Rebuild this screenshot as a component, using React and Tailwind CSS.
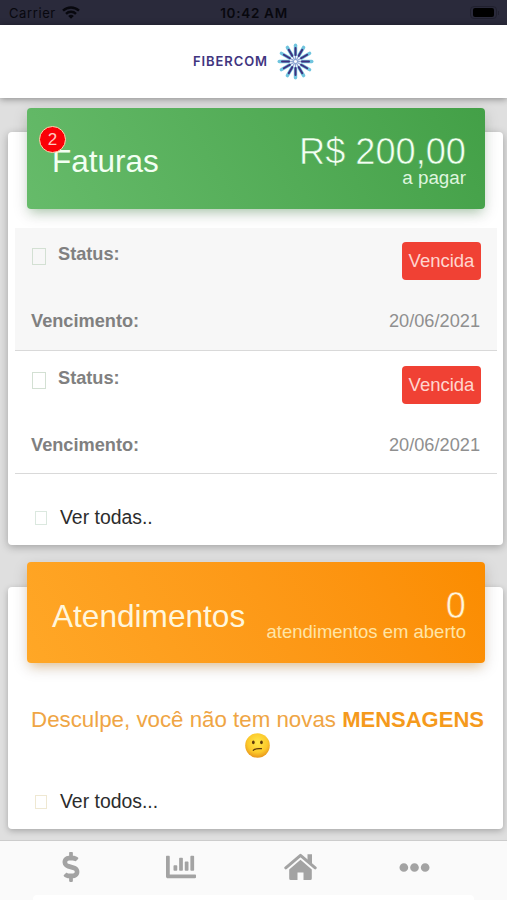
import React from "react"
import { FaDollarSign, FaChartBar, FaEllipsisH } from "react-icons/fa"

const faturas = [
    { id: 1, status: "Vencida", vencimento: "20/06/2021" },
    { id: 2, status: "Vencida", vencimento: "20/06/2021" },
]

const rays = [0, 30, 60, 90, 120, 150, 180, 210, 240, 270, 300, 330]

function StatusBar() {
    return (
        <div className="grid grid-cols-3 items-center h-[25px] pl-[9px] pr-[8px] pt-[2px] bg-[#2a2a3b] text-[#08080e] font-['Inter',sans-serif] text-[13px] leading-none">
            <div className="flex items-center gap-[6px]">
                <span className="tracking-[0.6px]">Carrier</span>
                <svg className="w-[18px] h-[13px] -mt-[2px]" viewBox="0 0 18 13" fill="none" stroke="currentColor" strokeWidth="2.4">
                    <path d="M1 4.7a11.5 11.5 0 0 1 16 0" />
                    <path d="M4 7.8a7.2 7.2 0 0 1 10 0" />
                    <path d="M9 12.8 6.2 10a4 4 0 0 1 5.6 0z" fill="currentColor" stroke="none" />
                </svg>
            </div>
            <span className="text-center text-[13.5px] font-semibold tracking-[0.7px] whitespace-nowrap">10:42 AM</span>
            <div className="flex items-center justify-end gap-px -mt-[2px]">
                <div className="w-[27px] h-[13px] p-[1px] rounded-[4px] border border-[#20202e]">
                    <div className="h-full mx-px rounded-[2px] bg-black" />
                </div>
                <div className="w-[1px] h-[4px] bg-[#20202e]" />
            </div>
        </div>
    )
}

function Logo() {
    return (
        <div className="flex items-center gap-[9px]">
            <span className="font-['Inter',sans-serif] text-[13px] font-semibold tracking-[0.9px] text-[#41357f]">FIBERCOM</span>
            <svg className="w-[37px] h-[37px]" viewBox="-18.5 -18.5 37 37" strokeLinecap="round">
                {rays.map((r) => (
                    <g key={r} transform={`rotate(${r})`}>
                        <path d="M0-7V-16.3" stroke="#6fc4de" strokeWidth="3.4" />
                        <path d="M0-2V-8" stroke="#8fa6d3" strokeWidth="1.3" />
                        <path d="M0-6.5V-13.5" stroke="#40307f" strokeWidth="2" />
                    </g>
                ))}
            </svg>
        </div>
    )
}

// missing glyph box
function Tofu({ className }) {
    return <span className={`block border ${className}`} />
}

function ConfusedFace() {
    return (
        <svg className="w-[25px] h-[25px]" viewBox="0 0 24 24">
            <defs>
                <radialGradient id="face" cx="50%" cy="38%" r="62%">
                    <stop offset="0" stopColor="#ffe84a" />
                    <stop offset="0.65" stopColor="#fcc92b" />
                    <stop offset="1" stopColor="#e8961c" />
                </radialGradient>
            </defs>
            <circle cx="12" cy="12" r="11.8" fill="url(#face)" />
            <ellipse cx="8" cy="9" rx="1.3" ry="1.7" fill="#5f3a0b" />
            <ellipse cx="15.8" cy="9" rx="1.3" ry="1.7" fill="#5f3a0b" />
            <path d="M8 16.6c2-1.6 4.4-2 7.8-1.5" fill="none" stroke="#5f3a0b" strokeWidth="1.2" strokeLinecap="round" />
        </svg>
    )
}

function HomeIcon() {
    return (
        <svg className="w-[33px] h-[28px]" viewBox="0 0 33 28" fill="currentColor">
            <path d="M1.8 14.8 16.5 2.4l14.7 12.4" fill="none" stroke="currentColor" strokeWidth="3" strokeLinecap="round" strokeLinejoin="round" />
            <path d="M23.5 1.2H28v11l-4.5-4z" />
            <path d="M16.5 6.8 27.8 16.400v9.100a1.500 1.500 0 0 1-1.500 1.500h-6.800v-7.500h-6V27H6.700a1.500 1.500 0 0 1-1.500-1.500v-9.100z" />
        </svg>
    )
}

function App() {
    return (
        <div className="flex flex-col w-full h-screen overflow-hidden bg-[#dfdfdf] font-['Liberation_Sans',Arial,sans-serif]">
            <StatusBar />

            <header className="relative z-10 flex items-center justify-center h-[73px] shrink-0 bg-white shadow-[0_1px_7px_rgba(0,0,0,0.4)]">
                <Logo />
            </header>

            <main className="flex-1 pl-[8px] pr-[4px] pt-[34px]">
                <section className="h-[413px] pl-[7px] pr-[6px] rounded-[4px] bg-white shadow-[0_2px_9px_rgba(0,0,0,0.28)]">
                    <div className="relative flex justify-between h-[101px] mx-[12px] -translate-y-[24px] -mb-[5px] pl-[25px] pr-[19px] rounded-[4px] bg-linear-60 from-[#66bb6a] to-[#43a047] shadow-[0_5px_16px_rgba(0,0,0,0.14),0_6px_10px_-4px_rgba(76,175,80,0.35)] text-[#f2fff2]">
                        <h2 className="pt-[35px] text-[31.5px] leading-[36px]">Faturas</h2>
                        <span className="absolute left-[12px] top-[18px] flex items-center justify-center w-[27px] h-[27px] rounded-full border border-[#ffd9b0] bg-[#fb0007] text-[17px] text-[#ffc9c2]">2</span>
                        <div className="pt-[24px] text-right">
                            <p className="text-[36.2px] leading-[40px] [-webkit-text-stroke:0.6px_#4aa84e]">R$ 200,00</p>
                            <p className="-mt-[5px] text-[18.8px] leading-[22px] text-[#dff5df]">a pagar</p>
                        </div>
                    </div>

                    <div className="text-[18.2px] text-[#8f8f8f]">
                        {faturas.map((f) => (
                            <div key={f.id} className="flex flex-col justify-between h-[123px] pt-[14px] pb-[19px] even:pt-[15px] even:pb-[18px] px-[16px] border-b border-[#d9d9d9] odd:bg-[#f7f7f7]">
                                <div className="flex justify-between">
                                    <div className="flex h-[25px] pl-px items-center gap-[12px]">
                                        <Tofu className="w-[14px] h-[17px] mt-[3px] border-[#d3e0d3]" />
                                        <b className="text-[#808080]">Status:</b>
                                    </div>
                                    <span className="flex items-center justify-center w-[79px] h-[38px] rounded-[4px] bg-[#f04134] text-[18.5px] text-[#ffd5ce]">{f.status}</span>
                                </div>
                                <div className="flex justify-between pr-px leading-[20px]">
                                    <b className="text-[#808080]">Vencimento:</b>
                                    <span>{f.vencimento}</span>
                                </div>
                            </div>
                        ))}
                    </div>

                    <div className="flex items-center gap-[13px] h-[24px] mt-[32px] pl-[20px] text-[19.4px] text-[#2c2c2c]">
                        <Tofu className="w-[12px] h-[14px] border-[#dbe8df]" />
                        <span>Ver todas..</span>
                    </div>
                </section>

                <section className="h-[242px] mt-[42px] pl-[7px] pr-[6px] rounded-[4px] bg-white shadow-[0_2px_6px_rgba(0,0,0,0.25)]">
                    <div className="flex justify-between h-[101px] mx-[12px] -translate-y-[25px] pl-[25px] pr-[19px] rounded-[4px] bg-linear-60 from-[#ffa726] to-[#fb8c00] shadow-[0_5px_16px_rgba(0,0,0,0.14),0_6px_10px_-4px_rgba(255,152,0,0.35)] text-[#fff6dc]">
                        <h2 className="pt-[36px] text-[31.6px] leading-[36px]">Atendimentos</h2>
                        <div className="pt-[24px] text-right">
                            <p className="text-[36.2px] leading-[40px] [-webkit-text-stroke:0.6px_#fc9207]">0</p>
                            <p className="-mt-[5px] text-[18.5px] leading-[22px] text-[#ffe4a6]">atendimentos em aberto</p>
                        </div>
                    </div>

                    <div className="flex flex-col items-center mt-[19px] pl-[3px] text-[22.3px] leading-[26px] text-[#efa544] whitespace-nowrap">
                        <p>Desculpe, você não tem novas <b className="text-[22px] text-[#f59a1c]">MENSAGENS</b></p>
                        <ConfusedFace />
                    </div>

                    <div className="flex items-center gap-[13px] h-[24px] mt-[32px] pl-[20px] text-[19.4px] text-[#2c2c2c]">
                        <Tofu className="w-[12px] h-[14px] border-[#efe8d2]" />
                        <span>Ver todos...</span>
                    </div>
                </section>
            </main>

            <nav className="flex flex-col justify-between h-[60px] shrink-0 border-t border-[#cccccc] bg-[#fafafa] text-[#a3a3a3]">
                <div className="flex items-center h-[52px] pl-[56px]">
                    <FaDollarSign size={30} />
                    <FaChartBar size={30} className="ml-[80px]" />
                    <div className="ml-[88px]">
                        <HomeIcon />
                    </div>
                    <FaEllipsisH size={31} className="ml-[82px]" />
                </div>
                <div className="h-[5px] mx-[33px] rounded-t-[4px] bg-white" />
            </nav>
        </div>
    )
}

export default App
